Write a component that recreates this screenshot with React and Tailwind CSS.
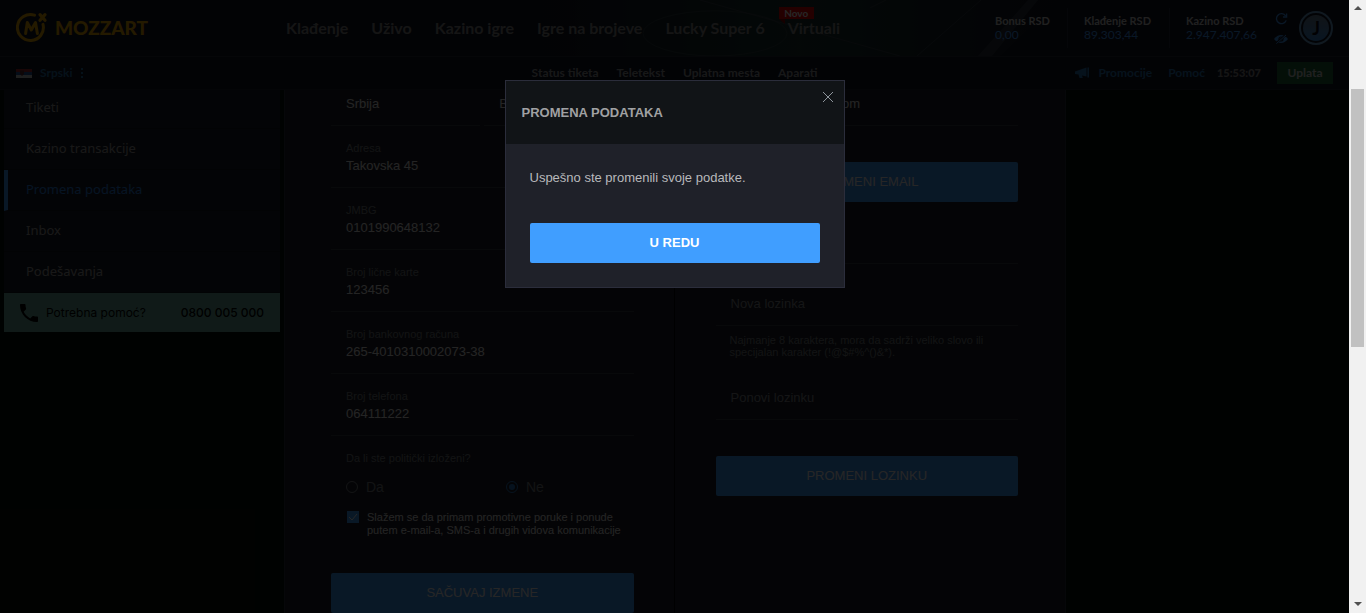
import React, { useState } from "react";

const NAV = ["Klađenje", "Uživo", "Kazino igre", "Igre na brojeve", "Lucky Super 6", "Virtuali"];
const SUBNAV = ["Status tiketa", "Teletekst", "Uplatna mesta", "Aparati"];
const BALANCES = [
  ["Bonus RSD", "0,00", "w-[89px]"],
  ["Klađenje RSD", "89.303,44", "w-[102px]"],
  ["Kazino RSD", "2.947.407,66", "w-[86px]"],
];
const MENU = ["Tiketi", "Kazino transakcije", "Promena podataka", "Inbox", "Podešavanja"];
const FIELDS = [
  ["adresa", "Adresa", "Takovska 45"],
  ["jmbg", "JMBG", "0101990648132"],
  ["karta", "Broj lične karte", "123456"],
  ["racun", "Broj bankovnog računa", "265-4010310002073-38"],
  ["telefon", "Broj telefona", "064111222"],
];

function Logo() {
  return (
    <a href="#" className="flex items-center gap-[7px] text-[#f0ac00]">
      <svg width="32" height="32" viewBox="0 0 32 32" fill="none" stroke="currentColor" strokeLinecap="round" strokeLinejoin="round">
        <path d="M18.5 3.2A13 13 0 1 0 27 12.4" strokeWidth="3" />
        <path d="M24 2.6l5 5.6M29 2.6l-5 5.6" strokeWidth="3.2" />
        <path d="M9.6 21.5L11.3 10.5L15.3 18L19.5 10.5L21.4 21.5" strokeWidth="3" />
      </svg>
      <span className="font-['Lato',sans-serif] text-[19px] font-black leading-6">MOZZART</span>
    </a>
  );
}

function Pitch() {
  return (
    <svg className="pointer-events-none absolute inset-0 h-full w-full" viewBox="0 0 1349 57" preserveAspectRatio="none" fill="none">
      <defs>
        <linearGradient id="grass" x1="0" x2="1">
          <stop offset="0" stopColor="#1a3a30" stopOpacity="0" />
          <stop offset="0.5" stopColor="#1c3833" stopOpacity="0.9" />
          <stop offset="1" stopColor="#1a3a30" stopOpacity="0" />
        </linearGradient>
      </defs>
      <path d="M540 0H1060L1000 57H540Z" fill="url(#grass)" />
      <ellipse cx="715" cy="34" rx="72" ry="23" stroke="#3a4a50" strokeOpacity="0.6" />
      <path d="M981 0L917 57M886 0L870 8M700 0l200 57" stroke="#3a4450" strokeOpacity="0.7" />
      <path d="M1028 0h10L992 57h-14z" fill="#333946" fillOpacity="0.8" />
    </svg>
  );
}

function Field({ id, label, value, type = "text" }) {
  return (
    <div className="flex h-[62px] flex-1 flex-col border-b border-[#383c45] px-[15px] pt-4">
      <label htmlFor={id} className="text-[11px] leading-[13px] text-[#7d8086]">{label}</label>
      <input id={id} type={type} defaultValue={value} className="h-5 w-full bg-transparent text-[13px] text-[#f0f0f0] outline-none" />
    </div>
  );
}

function Password({ id, label }) {
  return (
    <div className="flex h-[62px] flex-col justify-center border-b border-[#383c45] px-[15px] pt-[18px]">
      <input id={id} type="password" aria-label={label} placeholder={label} className="h-5 w-full bg-transparent text-[13px] outline-none placeholder:text-[#8a8d93]" />
    </div>
  );
}

function Action({ children }) {
  return (
    <button type="button" className="h-10 w-full shrink-0 rounded-[2px] bg-[#409eff] text-[13px] text-white">
      {children}
    </button>
  );
}

function Header() {
  return (
    <header className="sticky top-0 z-10 h-[90px] shrink-0 bg-[#131626] font-['Lato',sans-serif]">
      <div className="relative flex h-[57px] items-center border-b border-[#262a36] pl-4 pr-4">
        <Pitch />
        <div className="relative w-[270px]"><Logo /></div>
        <nav className="relative flex gap-[23px] text-[16px] font-bold text-[#8c8c8c]">
          {NAV.map((n) => (
            <a key={n} href="#" className="relative whitespace-nowrap">
              {n}
              {n === "Virtuali" && (
                <span className="absolute -left-[9px] -top-[9px] flex h-3 w-[35px] items-center justify-center bg-[#f00000] text-[10px] leading-3 text-white">
                  Novo
                  <svg className="absolute left-0 top-3" width="6" height="5"><path d="M0 0h6v5z" fill="#900000" /></svg>
                </span>
              )}
            </a>
          ))}
        </nav>
        <div className="relative ml-auto flex items-center">
          {BALANCES.map(([name, amount, width], i) => (
            <div key={name} className={`${width} relative leading-[14px]`}>
              <div className="text-[11px] font-bold text-[#d5d5d5]">{name}</div>
              <div className="text-[12px] text-[#409eff]">{amount}</div>
              {i < 2 && <span className="absolute -top-1.5 right-4 h-10 w-px bg-[#262c3c]" />}
            </div>
          ))}
          <div className="mr-[9px] flex w-[18px] flex-col items-center gap-[9px] text-[#409eff]">
            <button type="button" aria-label="Osveži">
              <svg width="13" height="12" viewBox="0 0 13 12" fill="none" stroke="currentColor" strokeWidth="1.3">
                <path d="M10.6 2.8A5 5 0 1 0 11.2 7.4M11.6 0.4V4H8" />
              </svg>
            </button>
            <button type="button" aria-label="Sakrij stanje">
              <svg width="14" height="10" viewBox="0 0 14 10">
                <path d="M0 5Q3.2 1 7 1T14 5Q10.8 9 7 9T0 5Z" fill="currentColor" />
                <circle cx="7" cy="5" r="2.6" fill="#131626" />
                <circle cx="7" cy="5" r="1.4" fill="currentColor" />
                <path d="M2 9.6L12 0.6" stroke="#131626" strokeWidth="2.2" />
                <path d="M2.4 9.6L12 1" stroke="currentColor" />
              </svg>
            </button>
          </div>
          <button type="button" className="flex size-[34px] items-center justify-center rounded-full border-2 border-[#6aa5d8] p-[2px]">
            <span className="flex size-full items-center justify-center rounded-full bg-linear-to-b from-[#6b8296] to-[#3a8fe0] text-[18px] font-bold text-[#0a0c16]">J</span>
          </button>
        </div>
      </div>
      <div className="grid h-[33px] grid-cols-[1fr_auto_1fr] items-center border-b border-[#1e2230] px-4">
        <button type="button" className="flex items-center gap-2 justify-self-start text-[12px] font-bold text-[#2471aa]">
          <svg width="16" height="9" viewBox="0 0 16 9">
            <path d="M0 0h16v3H0z" fill="#a52b31" />
            <path d="M0 3h16v3H0z" fill="#2459a0" />
            <path d="M0 6h16v3H0z" fill="#c8ccd0" />
            <path d="M4 1.5h4v3.5L6 7L4 5z" fill="#5c2833" />
          </svg>
          Srpski
          <svg width="3" height="10" viewBox="0 0 3 10" fill="currentColor"><path d="M0 0h2v2H0zM0 4h2v2H0zM0 8h2v2H0z" /></svg>
        </button>
        <nav className="flex gap-[18px] text-[12px] font-bold text-[#9c9ea3]">
          {SUBNAV.map((n) => <a key={n} href="#">{n}</a>)}
        </nav>
        <div className="flex items-center justify-self-end text-[12px] font-bold text-[#2878bb]">
          <svg width="15" height="12" viewBox="0 0 15 12" fill="currentColor">
            <path d="M0 4.5L11.5 0.5V9.5L7 8.5L7.8 11H4.5L3.5 7.6L0 7Z" />
            <path d="M12.4 0.5h1.6v10h-1.6z" />
          </svg>
          <a href="#" className="ml-2">Promocije</a>
          <a href="#" className="ml-4">Pomoć</a>
          <span className="ml-3 text-[11px] font-black text-[#8f8f8f]">15:53:07</span>
          <button type="button" className="ml-4 h-[22px] w-14 bg-[#20683a] text-[12px] font-bold text-[#d5d5d5]">Uplata</button>
        </div>
      </div>
    </header>
  );
}

function Sidebar() {
  return (
    <aside className="h-full pt-[88px] font-['Noto_Sans',sans-serif]">
      <nav className="flex flex-col bg-[#1a2029] text-[13px] text-[#a4a4a4]">
        {MENU.map((m) => (
          <a
            key={m}
            href="#"
            className={
              m === "Promena podataka"
                ? "flex h-[41px] items-center border-b border-b-[#11151b] border-l-4 border-l-[#409eff] pl-[18px] text-[#2a84ea]"
                : "flex h-[41px] items-center border-b border-b-[#11151b] pl-[22px]"
            }
          >
            {m}
          </a>
        ))}
      </nav>
      <a href="#" className="flex h-[39px] items-center bg-[#6bb0a0] pl-4 pr-4 font-['Inter',sans-serif] text-[12px] text-black">
        <svg width="18" height="18" viewBox="3 3 18 18" fill="currentColor" className="mr-2">
          <path d="M6.62 10.79c1.44 2.83 3.76 5.14 6.59 6.59l2.2-2.2c.27-.27.67-.36 1.02-.24 1.12.37 2.33.57 3.57.57.55 0 1 .45 1 1V20c0 .55-.45 1-1 1C10.61 21 3 13.39 3 4c0-.55.45-1 1-1h3.5c.55 0 1 .45 1 1 0 1.25.2 2.45.57 3.57.11.35.03.74-.25 1.02l-2.2 2.2z" />
        </svg>
        <span>Potrebna pomoć?</span>
        <span className="ml-auto font-medium">0800 005 000</span>
      </a>
    </aside>
  );
}

function DataForm() {
  return (
    <form className="flex flex-1 flex-col border-r border-[#000] pl-[46px] pr-10 pt-16">
      <div className="flex gap-1">
        <Field id="drzava" label="Država" value="Srbija" />
        <Field id="grad" label="Grad" value="Beograd" />
      </div>
      {FIELDS.map(([id, label, value]) => (
        <div key={id} className="flex"><Field id={id} label={label} value={value} /></div>
      ))}
      <fieldset className="px-[15px] pt-4">
        <legend className="float-left w-full text-[11px] leading-[13px] text-[#7d8086]">Da li ste politički izloženi?</legend>
        <div className="clear-both grid grid-cols-[160px_1fr] pt-3 text-[14px] leading-5 text-[#7d8086]">
          <label className="flex items-center gap-2">
            <input type="radio" name="izlozen" className="size-3 appearance-none rounded-full border border-[#80848c]" />
            Da
          </label>
          <label className="flex items-center gap-2">
            <input type="radio" name="izlozen" defaultChecked className="size-3 appearance-none rounded-full border border-[#2d7cc8] bg-[#2d7cc8] bg-clip-content p-[2px]" />
            Ne
          </label>
        </div>
      </fieldset>
      <label className="relative mt-3.5 flex gap-2 pl-4 text-[11px] leading-[13px] text-[#f0f0f0]">
        <input type="checkbox" defaultChecked className="size-3 shrink-0 appearance-none bg-[#409eff]" />
        <svg className="pointer-events-none absolute left-4 top-0" width="12" height="12" viewBox="0 0 12 12" fill="none" stroke="#fff">
          <path d="M2 6l3 3l5-6" />
        </svg>
        <span>Slažem se da primam promotivne poruke i ponude putem e-mail-a, SMS-a i drugih vidova komunikacije</span>
      </label>
      <div className="mt-9"><Action>SAČUVAJ IZMENE</Action></div>
    </form>
  );
}

function AccountForm() {
  return (
    <form className="flex flex-1 flex-col pl-[41px] pr-[47px] pt-16">
      <div className="flex"><Field id="email" label="Email" value="petar.petric@mail.com" /></div>
      <div className="mt-9"><Action>PROMENI EMAIL</Action></div>
      <Password id="stara" label="Stara lozinka" />
      <Password id="nova" label="Nova lozinka" />
      <p className="pl-[14px] pr-4 pt-2 text-[11px] leading-3 text-[#7d8086]">
        Najmanje 8 karaktera, mora da sadrži veliko slovo ili specijalan karakter (!@$#%^()&amp;*).
      </p>
      <Password id="ponovi" label="Ponovi lozinku" />
      <div className="mt-9"><Action>PROMENI LOZINKU</Action></div>
    </form>
  );
}

function Dialog({ onClose }) {
  return (
    <div className="absolute inset-0 z-20 flex items-start justify-center bg-black/85 pt-20">
      <section role="dialog" aria-labelledby="dialog-title" className="relative w-[340px] border border-[#2b2d3b] bg-[#1f2129]">
        <h2 id="dialog-title" className="flex h-[63px] items-center bg-[#111417] px-4 text-[13px] font-bold text-[#a0a1a3]">
          PROMENA PODATAKA
        </h2>
        <button type="button" aria-label="Zatvori" onClick={onClose} className="absolute right-[11px] top-[11px]">
          <svg width="10" height="10" viewBox="0 0 10 10" stroke="#8d949b" fill="none"><path d="M0 0l10 10M10 0L0 10" /></svg>
        </button>
        <div className="px-6 pb-6 pt-[25px]">
          <p className="text-[13px] leading-[18px] text-[#b8b9bc]">Uspešno ste promenili svoje podatke.</p>
          <button type="button" onClick={onClose} className="mt-9 h-10 w-full rounded-[2px] bg-[#409eff] text-[13px] font-bold text-white">
            U REDU
          </button>
        </div>
      </section>
    </div>
  );
}

function Scrollbar() {
  return (
    <div aria-hidden="true" className="flex w-[17px] shrink-0 flex-col items-center bg-[#f1f1f1] py-[6px]">
      <svg width="8" height="5"><path d="M4 0l4 4H0z" fill="#505050" /></svg>
      <div className="mt-[78px] h-[258px] w-[13px] bg-[#c1c1c1]" />
      <svg width="8" height="5" className="mt-auto"><path d="M0 0h8L4 4z" fill="#505050" /></svg>
    </div>
  );
}

export default function App() {
  const [open, setOpen] = useState(true);
  return (
    <div className="flex h-screen bg-[#060f08] font-['Liberation_Sans',Arial,sans-serif]">
      <div className="relative flex min-w-0 flex-1 flex-col overflow-hidden">
        <Header />
        <main className="-mt-[90px] grid min-h-0 flex-1 grid-cols-[276px_minmax(0,782px)] gap-1 overflow-hidden pl-1">
          <Sidebar />
          <div className="flex border-x border-[#2c313c] bg-[#1c2029]">
            <DataForm />
            <AccountForm />
          </div>
        </main>
        {open && <Dialog onClose={() => setOpen(false)} />}
      </div>
      <Scrollbar />
    </div>
  );
}
